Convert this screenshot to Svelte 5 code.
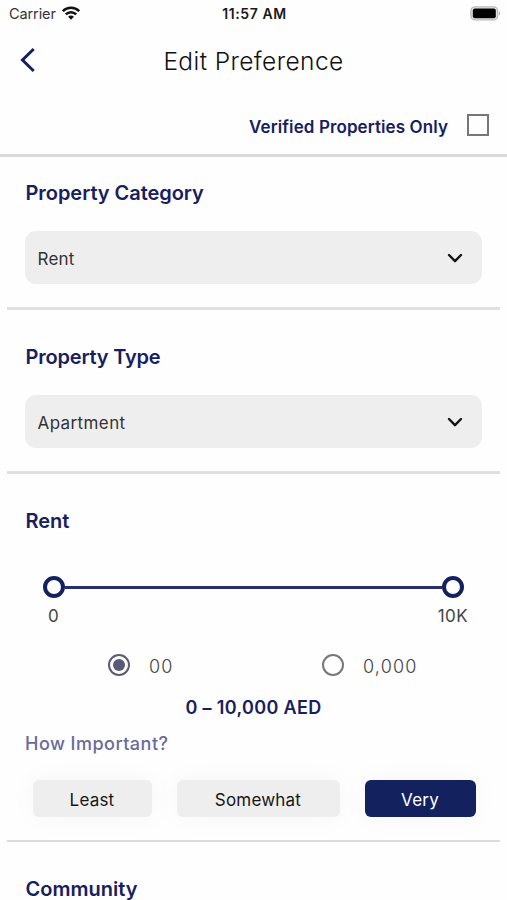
<script>
  const selects = [
    { title: 'Property Category', value: 'Rent', spacing: -0.05, valueSpacing: 0.2 },
    { title: 'Property Type', value: 'Apartment', spacing: -0.2, valueSpacing: 0.4 }
  ];
  let verified = $state(false);
  let importance = $state('Very');
  const levels = [
    { name: 'Least', width: 119 },
    { name: 'Somewhat', width: 163 },
    { name: 'Very', width: 111 }
  ];
</script>

<div class="screen">
  <div class="status">
    <div class="carrier">
      <span>Carrier</span>
      <svg width="18" height="14" viewBox="0 0 18 14" fill="none" stroke="#111" stroke-width="2.5">
        <path d="M.8 5.2C5.3.6 12.7.6 17.2 5.2" />
        <path d="M3.8 8.3C6.7 5.4 11.3 5.4 14.2 8.3" />
        <path d="M9 13.7 6.1 10.7C7.7 9.2 10.3 9.2 11.9 10.7Z" fill="#111" stroke="none" />
      </svg>
    </div>
    <span class="time">11:57 AM</span>
    <svg class="battery" width="31" height="15" viewBox="0 0 31 15">
      <rect x="1" y=".9" width="26.6" height="13" rx="4" fill="#e8e8e8" stroke="#b9b9b9" stroke-width="1.4" />
      <rect x="2.8" y="2.6" width="23" height="9.6" rx="2" fill="#000" />
      <path d="M29 5.2C30.7 6 30.7 8.6 29 9.4Z" fill="#b5b5b5" />
    </svg>
  </div>

  <header>
    <button class="back" aria-label="Back">
      <svg width="16" height="26" viewBox="0 0 16 26" fill="none" stroke="#14215f" stroke-width="3">
        <path d="M13.7 2 2.5 13 13.7 24" />
      </svg>
    </button>
    <h1>Edit Preference</h1>
  </header>

  <div class="verified">
    <span>Verified Properties Only</span>
    <button class="check" role="checkbox" aria-checked={verified} aria-label="Verified Properties Only" onclick={() => (verified = !verified)}></button>
  </div>

  {#each selects as s}
    <section class="pick">
      <h2 style:letter-spacing="{s.spacing}px">{s.title}</h2>
      <div class="select">
        <span style:letter-spacing="{s.valueSpacing}px">{s.value}</span>
        <svg width="16" height="11" viewBox="0 0 16 11" fill="none" stroke="#151515" stroke-width="2.4" stroke-linecap="round" stroke-linejoin="round">
          <path d="M2 2 8 8.2 14 2" />
        </svg>
      </div>
    </section>
  {/each}

  <section class="rent">
    <h2>Rent</h2>
    <div class="slider">
      <i class="thumb"></i><i class="track"></i><i class="thumb"></i>
    </div>
    <div class="scale"><span>0</span><span>10K</span></div>
    <div class="radios">
      <div class="radio on"><i></i><span>00</span></div>
      <div class="radio"><i></i><span>0,000</span></div>
    </div>
    <div class="range">0 – 10,000 AED</div>
    <div class="how">How Important?</div>
    <div class="levels">
      {#each levels as l}
        <button class:active={importance === l.name} style:width="{l.width}px" onclick={() => (importance = l.name)}>{l.name}</button>
      {/each}
    </div>
  </section>

  <section class="community"><h2>Community</h2></section>
</div>

<style>
  .screen {
    height: 900px;
    overflow: hidden;
    background: #fefefe;
    font-family: Inter, "Liberation Sans", sans-serif;
    color: #222;
  }
  .screen, .screen * { box-sizing: border-box; }
  h1, h2 { margin: 0; }
  button { border: 0; padding: 0; font: inherit; background: none; }
  svg { display: block; flex: none; }
  .status {
    display: grid;
    grid-template-columns: 1fr auto 1fr;
    align-items: center;
    height: 27px;
    padding: 0 6px 0 9px;
    font-size: 14.5px;
  }
  .carrier { display: flex; align-items: center; gap: 6px; margin-top: -1px; color: #333; letter-spacing: -.1px; }
  .time { font-weight: 600; font-size: 14px; color: #1a1a1a; letter-spacing: .6px; margin-left: -1px; }
  .battery { justify-self: end; margin-top: -1px; }
  header {
    display: grid;
    grid-template-columns: 40px 1fr 40px;
    align-items: center;
    height: 67px;
    padding: 0 20px;
  }
  .back { width: 16px; height: 26px; margin-top: -2px; }
  h1 { font-weight: 300; font-size: 24.5px; line-height: 30px; text-align: center; color: #111; letter-spacing: .4px; }
  .verified {
    display: flex;
    justify-content: flex-end;
    align-items: center;
    gap: 19px;
    height: 63px;
    padding: 4px 18px 0 0;
    border-bottom: 3px solid #d9dadb;
    font-size: 17px;
    font-weight: 600;
    letter-spacing: .1px;
    color: #17205e;
  }
  .verified span { padding-top: 2px; }
  .check { width: 22px; height: 22px; border: 2px solid #777; margin-top: -3px; }
  section { margin: 0 7px; padding: 0 18px; }
  h2 { font-size: 20px; line-height: 24px; font-weight: 600; color: #17205e; padding-left: .5px; }
  .pick { height: 153px; padding-top: 24px; border-bottom: 3px solid #e0e0e1; }
  .pick + .pick { height: 164px; padding-top: 35px; }
  .select {
    display: flex;
    align-items: center;
    justify-content: space-between;
    height: 53px;
    margin-top: 26px;
    padding: 1px 19px 0 12.5px;
    border-radius: 11px;
    background: #eee;
    font-size: 17px;
    color: #333;
  }
  .select span { padding-top: 1px; }
  .rent { height: 368px; padding-top: 35px; border-bottom: 2px solid #dcdcdd; }
  .slider { display: flex; align-items: center; margin: 43px 18px 0; }
  .thumb { width: 22px; height: 22px; border: 4px solid #14215f; border-radius: 50%; }
  .track { flex: 1; height: 3px; background: #25306c; }
  .scale { display: flex; justify-content: space-between; margin: 7px 14px 0 23px; font-size: 17px; line-height: 22px; color: #444; }
  .scale span:last-child { letter-spacing: .4px; }
  .radios { display: flex; height: 22px; margin-top: 27px; padding-left: 83px; }
  .radio { display: flex; align-items: center; gap: 19px; width: 214px; font-size: 18px; font-weight: 300; letter-spacing: 1.2px; color: #444; }
  .radio span { padding-top: 2px; }
  .radio:last-child { width: auto; }
  .radio i { display: grid; place-items: center; width: 22px; height: 22px; border: 2px solid #777; border-radius: 50%; }
  .radio.on i { border-color: #5d5d70; }
  .radio.on i::after { content: ""; width: 12px; height: 12px; border-radius: 50%; background: #59597a; }
  .range { margin-top: 20px; line-height: 24px; text-align: center; font-size: 18px; font-weight: 600; letter-spacing: .35px; color: #17205e; }
  .how { margin-top: 12px; line-height: 24px; font-size: 18px; font-weight: 500; letter-spacing: .48px; color: #686b9b; }
  .levels { display: flex; justify-content: space-between; margin: 24px 6.5px 0 7.5px; }
  .levels button { height: 37px; padding-top: 2px; border-radius: 6px; background: #eee; color: #161616; font-size: 17px; letter-spacing: .2px; box-shadow: 0 0 28px rgba(0, 0, 0, .04); }
  .levels button.active { background: #14215f; color: #fff; }
  .community { padding-top: 35px; }
</style>
